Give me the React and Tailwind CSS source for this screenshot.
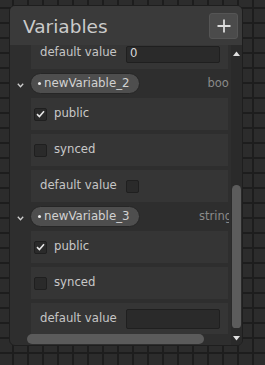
import React from 'react';

const font = { fontFamily: '"DejaVu Sans", Verdana, sans-serif' };

function Check({ checked }) {
  return (
    <div className="w-[13px] h-[13px] rounded-[2px] bg-[#2a2a2a] border border-[#1f1f1f] flex items-center justify-center">
      {checked && (
        <svg width="9" height="8" viewBox="0 0 9 8">
          <path d="M1 4.2 L3.4 6.5 L8 1.2" fill="none" stroke="#e6e6e6" strokeWidth="1.6" />
        </svg>
      )}
    </div>
  );
}

function Row({ children }) {
  return (
    <div className="h-[32px] ml-[21px] mr-[3px] bg-[#353535] flex items-center shrink-0">{children}</div>
  );
}

function DefaultRow({ children }) {
  return (
    <Row>
      <span className="ml-[9px] w-[86px] text-[11.7px] text-[#c6c6c6] whitespace-nowrap">default value</span>
      {children}
    </Row>
  );
}

function Header({ name, type }) {
  return (
    <div className="h-[21px] flex items-center pl-[7px] pr-[2px] shrink-0">
      <svg width="7" height="5" viewBox="0 0 7 5" className="mt-[4px]">
        <path d="M0.8 0.8 L3.5 3.8 L6.2 0.8" fill="none" stroke="#cfcfcf" strokeWidth="1.3" />
      </svg>
      <div className="ml-[6px] h-[21px] w-[110px] rounded-full bg-[#4e4e4e] border border-[#262626] flex items-center">
        <span className="ml-[7px] w-[3px] h-[3px] rounded-full bg-[#f0f0f0]" />
        <span className="ml-[3px] text-[11.8px] text-[#d2d2d2] whitespace-nowrap">{name}</span>
      </div>
      <div className="flex-1 overflow-hidden flex justify-end">
        <span className="-mr-[3px] text-[11.5px] text-[#8a8a8a] whitespace-nowrap">{type}</span>
      </div>
    </div>
  );
}

export default function App() {
  return (
    <div
      className="w-[265px] h-[365px] pt-[5px] pl-[9px] bg-[#2c2c2c] bg-[linear-gradient(to_right,#1d1d1d_2px,transparent_2px),linear-gradient(to_bottom,#1d1d1d_2px,transparent_2px)] bg-[size:15px_15px] bg-[position:12px_7px]"
      style={font}
    >
      <div className="w-[234px] h-[341px] rounded-[6px] border border-[#1e1e1e] bg-[#2e2e2e] flex flex-col overflow-hidden">
        <div className="h-[39px] shrink-0 bg-[#3a3a3a] flex items-center justify-between pl-[13px] pr-[4px]">
          <span className="text-[18.5px] text-[#cbcbcb] mt-[2px]">Variables</span>
          <button className="w-[29px] h-[26px] mt-[1px] rounded-[3px] bg-[#4b4b4b] border border-[#555] flex items-center justify-center">
            <svg width="14" height="14" viewBox="0 0 14 14">
              <path d="M7 0.5 V13.5 M0.5 7 H13.5" stroke="#dcdcdc" strokeWidth="1.8" />
            </svg>
          </button>
        </div>
        <div className="flex flex-1 min-h-0">
          <div className="flex-1 flex flex-col min-w-0">
            <div className="h-[289px] overflow-hidden">
              <div className="-mt-[8px] flex flex-col gap-[4px]">
                <DefaultRow>
                  <div className="w-[94px] h-[17px] mt-[2px] bg-[#2a2a2a] border border-[#1f1f1f] rounded-[2px] text-[11.7px] text-[#d8d8d8] pl-[3px] flex items-center leading-none">0</div>
                </DefaultRow>
                <Header name="newVariable_2" type="bool" />
                <Row>
                  <div className="ml-[3px]"><Check checked /></div>
                  <span className="ml-[7px] text-[11.7px] text-[#c8c8c8]">public</span>
                </Row>
                <Row>
                  <div className="ml-[3px]"><Check /></div>
                  <span className="ml-[7px] text-[11.7px] text-[#c8c8c8]">synced</span>
                </Row>
                <DefaultRow>
                  <Check />
                </DefaultRow>
                <Header name="newVariable_3" type="string" />
                <Row>
                  <div className="ml-[3px]"><Check checked /></div>
                  <span className="ml-[7px] text-[11.7px] text-[#c8c8c8]">public</span>
                </Row>
                <Row>
                  <div className="ml-[3px]"><Check /></div>
                  <span className="ml-[7px] text-[11.7px] text-[#c8c8c8]">synced</span>
                </Row>
                <DefaultRow>
                  <div className="w-[94px] h-[20px] bg-[#2a2a2a] border border-[#1f1f1f] rounded-[2px]" />
                </DefaultRow>
              </div>
            </div>
            <div className="h-[10px] ml-[17px] w-[177px] rounded-full bg-[#5b5b5b]" />
          </div>
          <div className="w-[11px] bg-[#2a2a2a] flex flex-col items-center">
            <svg width="7" height="5" viewBox="0 0 7 5" className="mt-[6px]">
              <path d="M0 5 L3.5 0.5 L7 5 Z" fill="#e0e0e0" />
            </svg>
            <div className="mt-[129px] w-[9px] h-[143px] rounded-t-[5px] rounded-b-[4px] bg-[#5c5c5c]" />
            <svg width="7" height="5" viewBox="0 0 7 5" className="mt-[8px]">
              <path d="M0 0 L3.5 4.5 L7 0 Z" fill="#e0e0e0" />
            </svg>
          </div>
        </div>
      </div>
    </div>
  );
}
